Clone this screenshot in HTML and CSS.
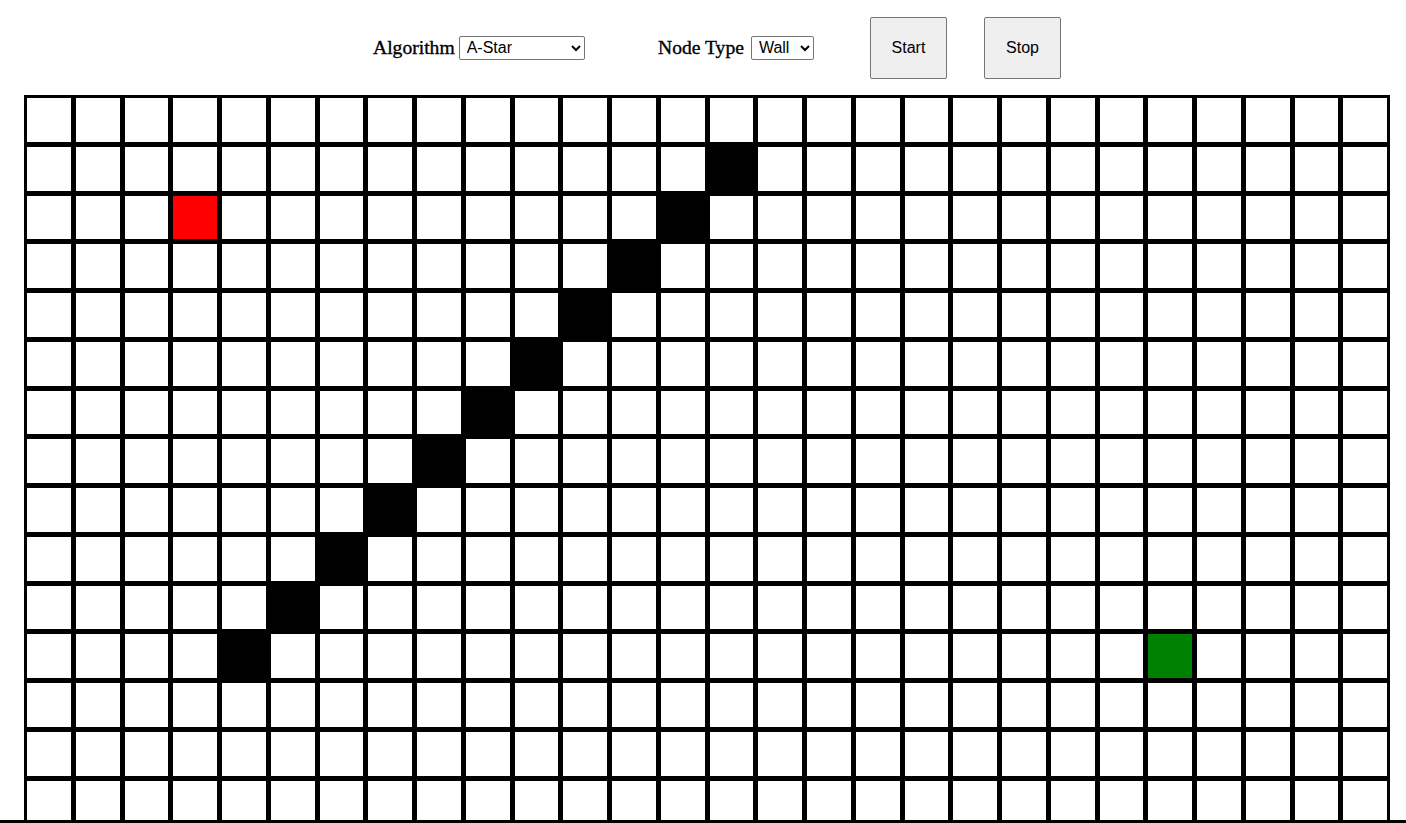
FILE: index.html
```html
<!DOCTYPE html>
<html>
<head>
<meta charset="utf-8">
<title>Pathfinding</title>
<link rel="stylesheet" href="styles.css">
</head>
<body>
<div class="toolbar">
  <div class="field field-algo">
    <label class="field-label" for="algo">Algorithm</label>
    <select id="algo" class="select select-algo">
      <option>A-Star</option>
      <option>Dijkstra</option>
      <option>BFS</option>
      <option>DFS</option>
    </select>
  </div>
  <div class="field field-node">
    <label class="field-label" for="node">Node Type</label>
    <select id="node" class="select select-node">
      <option>Wall</option>
      <option>Start</option>
      <option>End</option>
    </select>
  </div>
  <button class="btn btn-start">Start</button>
  <button class="btn btn-stop">Stop</button>
</div>
<div class="grid" id="grid"></div>
<div class="bottom-line"></div>
<script src="script.js"></script>
</body>
</html>
```
FILE: styles.css
```css
html, body {
  margin: 0;
  padding: 0;
  background: #fff;
  overflow: hidden;
}
body {
  font-family: "Liberation Serif", "Times New Roman", serif;
}
.toolbar {
  height: 95px;
  display: flex;
  align-items: center;
  padding-left: 373px;
  box-sizing: border-box;
}
.field {
  display: flex;
  align-items: center;
}
.field-label {
  font-size: 19.6px;
  font-weight: normal;
  -webkit-text-stroke: 0.35px #000;
  color: #000;
  margin-right: 4px;
}
.field-node .field-label {
  margin-right: 7px;
}
.field-algo {
  width: 285px;
}
.field-node {
  width: 212px;
}
.select {
  font-family: "Liberation Sans", Arial, sans-serif;
  font-size: 16px;
  height: 24px;
  border: 1px solid #767676;
  border-radius: 2px;
  background: #fff;
  color: #000;
  padding: 0 2px 0 3px;
}
.select-algo {
  width: 126px;
}
.select-node {
  width: 63px;
}
.btn {
  width: 77px;
  height: 62px;
  font-family: "Liberation Sans", Arial, sans-serif;
  font-size: 16px;
  background: #efefef;
  border: 1px solid #767676;
  border-radius: 2px;
  color: #000;
  padding: 0;
}
.btn-start {
  margin-right: 37px;
}
.grid {
  margin-left: 24px;
  width: 1366px;
  box-sizing: border-box;
  display: grid;
  grid-template-columns: repeat(28, 43.75px);
  grid-auto-rows: 43.75px;
  gap: 5px;
  padding: 3px;
  background: #000;
}
.cell {
  background: #fff;
}
.cell.wall {
  background: #000;
}
.cell.start {
  background: #ff0000;
}
.cell.end {
  background: #008000;
}
.bottom-line {
  position: fixed;
  left: 0;
  right: 0;
  bottom: 0;
  height: 3px;
  background: #000;
}
```
FILE: script.js
```js
(function () {
  var grid = document.getElementById('grid');
  var cols = 28, rows = 16;
  var walls = {};
  for (var r = 1; r <= 11; r++) {
    walls[r + ',' + (15 - r)] = true;
  }
  for (var y = 0; y < rows; y++) {
    for (var x = 0; x < cols; x++) {
      var c = document.createElement('div');
      c.className = 'cell';
      if (walls[y + ',' + x]) c.className += ' wall';
      if (y === 2 && x === 3) c.className += ' start';
      if (y === 11 && x === 23) c.className += ' end';
      grid.appendChild(c);
    }
  }
})();
```
